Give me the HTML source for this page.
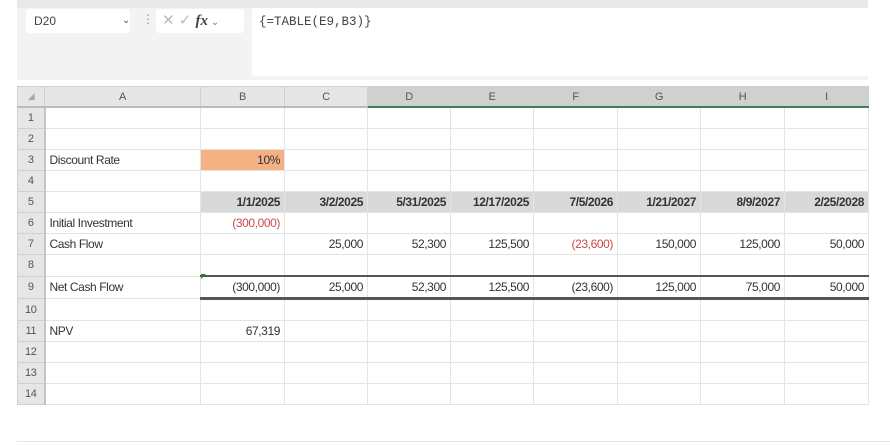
<!DOCTYPE html>
<html><head><style>
body{margin:0;width:890px;height:445px;background:#fff;position:relative;overflow:hidden;font-family:"Liberation Sans",sans-serif;color:#333}
.topstrip{position:absolute;left:17px;top:0;width:851px;height:8px;background:#e9e9e9}
.fbar{position:absolute;left:17px;top:8px;width:851px;height:72px;background:#f3f3f3}
.namebox{position:absolute;left:26px;top:9px;width:104px;height:24px;background:#fff;border-radius:3px;font-size:12px;line-height:24px;text-indent:8px;color:#444}
.fxbox{position:absolute;left:156px;top:9px;width:88px;height:24px;background:#fff;border-radius:3px;color:#bbb;font-size:15px;line-height:24px}
.input{position:absolute;left:252px;top:8px;width:616px;height:68px;background:#fff;border-radius:3px 0 0 3px;font-family:"Liberation Mono",monospace;font-size:12.5px;color:#444;padding:7px 0 0 7px;box-sizing:border-box}
table{position:absolute;left:17px;top:86px;border-collapse:collapse;table-layout:fixed;font-size:12px;letter-spacing:-0.4px}
td{height:20px;padding:0 4px;border:1px solid #e4e4e4;white-space:nowrap;overflow:hidden}
tr.h td{background:#e6e6e6;color:#555;text-align:center;font-size:11px;height:19px;border-color:#d0d0d0;border-bottom:2px solid #bcbcbc}
tr.h td.s{background:#d0d0d0;border-bottom:2px solid #3f7f5a}
td.rh{background:#e6e6e6;text-align:center;padding:0;color:#555;font-size:11px;border-color:#d0d0d0;border-right:2px solid #c4c4c4}
.r{text-align:right}
.red{color:#d04848}
.hd td.g{background:#d9d9d9;font-weight:bold;text-align:right}
.or{background:#f4b183;text-align:right}
.t9 td.b{border-top:2px solid #555;border-bottom:3px solid #555}
.bottomline{position:absolute;left:17px;top:441px;width:873px;height:1px;background:#e6e6e6}
</style></head><body>
<div class="topstrip"></div>
<div class="fbar"></div>
<div class="namebox">D20<span style="position:absolute;left:88px;top:0;color:#555;font-size:10px">&#8964;</span></div>
<div style="position:absolute;left:142px;top:12px;color:#999;font-size:12px">&#8942;</div>
<div class="fxbox"><span style="margin-left:6px">✕</span> <span>✓</span> <i style="color:#444;font-family:'Liberation Serif',serif;font-weight:bold">fx</i><span style="font-size:10px;color:#777"> &#8964;</span></div>
<div class="input">{=TABLE(E9,B3)}</div>
<table>
<colgroup><col style="width:27px"><col style="width:156px"><col style="width:84px"><col style="width:83px"><col style="width:83px"><col style="width:83px"><col style="width:84px"><col style="width:83px"><col style="width:84px"><col style="width:84px"></colgroup>
<tr class="h"><td style="font-size:9px;color:#aaa">◢</td><td>A</td><td>B</td><td>C</td><td class="s">D</td><td class="s">E</td><td class="s">F</td><td class="s">G</td><td class="s">H</td><td class="s">I</td></tr>
<tr><td class="rh">1</td><td></td><td></td><td></td><td></td><td></td><td></td><td></td><td></td><td></td></tr>
<tr><td class="rh">2</td><td></td><td></td><td></td><td></td><td></td><td></td><td></td><td></td><td></td></tr>
<tr><td class="rh">3</td><td>Discount Rate</td><td class="or">10%</td><td></td><td></td><td></td><td></td><td></td><td></td><td></td></tr>
<tr><td class="rh">4</td><td></td><td></td><td></td><td></td><td></td><td></td><td></td><td></td><td></td></tr>
<tr class="hd"><td class="rh">5</td><td></td><td class="g">1/1/2025</td><td class="g">3/2/2025</td><td class="g">5/31/2025</td><td class="g">12/17/2025</td><td class="g">7/5/2026</td><td class="g">1/21/2027</td><td class="g">8/9/2027</td><td class="g">2/25/2028</td></tr>
<tr><td class="rh">6</td><td>Initial Investment</td><td class="r red">(300,000)</td><td></td><td></td><td></td><td></td><td></td><td></td><td></td></tr>
<tr><td class="rh">7</td><td>Cash Flow</td><td></td><td class="r">25,000</td><td class="r">52,300</td><td class="r">125,500</td><td class="r red">(23,600)</td><td class="r">150,000</td><td class="r">125,000</td><td class="r">50,000</td></tr>
<tr><td class="rh">8</td><td></td><td></td><td></td><td></td><td></td><td></td><td></td><td></td><td></td></tr>
<tr class="t9"><td class="rh">9</td><td>Net Cash Flow</td><td class="r b" style="position:relative">(300,000)</td><td class="r b">25,000</td><td class="r b">52,300</td><td class="r b">125,500</td><td class="r b">(23,600)</td><td class="r b">125,000</td><td class="r b">75,000</td><td class="r b">50,000</td></tr>
<tr><td class="rh">10</td><td></td><td></td><td></td><td></td><td></td><td></td><td></td><td></td><td></td></tr>
<tr><td class="rh">11</td><td>NPV</td><td class="r">67,319</td><td></td><td></td><td></td><td></td><td></td><td></td><td></td></tr>
<tr><td class="rh">12</td><td></td><td></td><td></td><td></td><td></td><td></td><td></td><td></td><td></td></tr>
<tr><td class="rh">13</td><td></td><td></td><td></td><td></td><td></td><td></td><td></td><td></td><td></td></tr>
<tr><td class="rh">14</td><td></td><td></td><td></td><td></td><td></td><td></td><td></td><td></td><td></td></tr>
</table>
<div style="position:absolute;left:201px;top:274px;width:0;height:0;border-top:5px solid #2e7d32;border-right:5px solid transparent"></div>
<div class="bottomline"></div>
</body></html>
